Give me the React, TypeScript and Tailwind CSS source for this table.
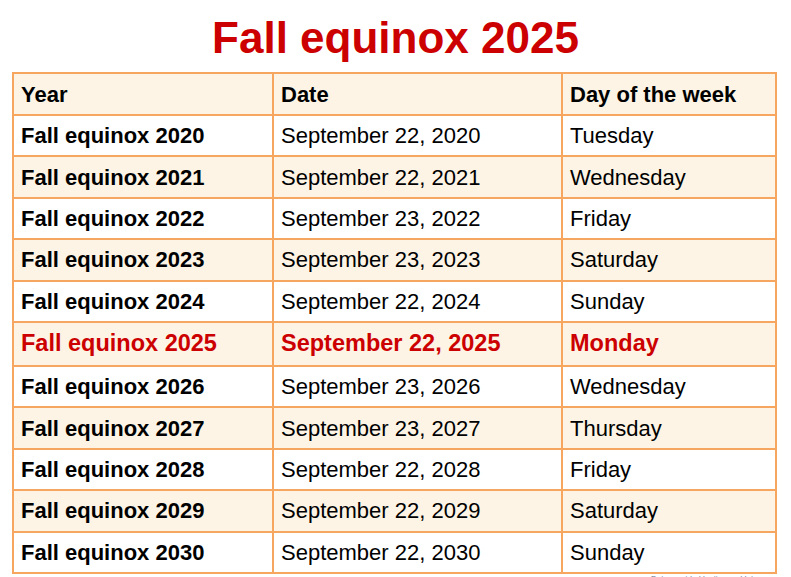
import React from 'react';

const rows = [
  { year: 'Fall equinox 2020', date: 'September 22, 2020', day: 'Tuesday' },
  { year: 'Fall equinox 2021', date: 'September 22, 2021', day: 'Wednesday' },
  { year: 'Fall equinox 2022', date: 'September 23, 2022', day: 'Friday' },
  { year: 'Fall equinox 2023', date: 'September 23, 2023', day: 'Saturday' },
  { year: 'Fall equinox 2024', date: 'September 22, 2024', day: 'Sunday' },
  { year: 'Fall equinox 2025', date: 'September 22, 2025', day: 'Monday', current: true },
  { year: 'Fall equinox 2026', date: 'September 23, 2026', day: 'Wednesday' },
  { year: 'Fall equinox 2027', date: 'September 23, 2027', day: 'Thursday' },
  { year: 'Fall equinox 2028', date: 'September 22, 2028', day: 'Friday' },
  { year: 'Fall equinox 2029', date: 'September 22, 2029', day: 'Saturday' },
  { year: 'Fall equinox 2030', date: 'September 22, 2030', day: 'Sunday' },
];

export default function App() {
  return (
    <div className="w-[791px] h-[577px] overflow-hidden bg-white text-black" style={{ fontFamily: '"Liberation Sans", Arial, sans-serif' }}>
      <h1 className="pt-4 text-center text-[44px] leading-none font-bold text-[#cc0000]">Fall equinox 2025</h1>

      <table className="ml-[12px] mt-[12px] w-[763px] border-collapse table-fixed">
        <colgroup>
          <col className="w-[260px]" />
          <col className="w-[289px]" />
          <col className="w-[214px]" />
        </colgroup>
        <thead>
          <tr className="bg-[#fdf4e5] h-[42px]">
            <th className="border-2 border-[#f7a660] pl-[7px] text-left text-[22px] font-bold">Year</th>
            <th className="border-2 border-[#f7a660] pl-[7px] text-left text-[22px] font-bold">Date</th>
            <th className="border-2 border-[#f7a660] pl-[7px] text-left text-[22px] font-bold">Day of the week</th>
          </tr>
        </thead>
        <tbody>
          {rows.map((r, i) => (
            <tr key={r.year} className={`${i % 2 === 1 ? 'bg-[#fdf4e5]' : 'bg-white'} ${r.current ? 'h-[44px]' : 'h-[41.4px]'}`}>
              {r.current ? (
                <>
                  <td className="border-2 border-[#f7a660] pl-[7px] text-[23.5px] font-bold text-[#cc0000]">{r.year}</td>
                  <td className="border-2 border-[#f7a660] pl-[7px] text-[23.5px] font-bold text-[#cc0000]">{r.date}</td>
                  <td className="border-2 border-[#f7a660] pl-[7px] text-[23.5px] font-bold text-[#cc0000]">{r.day}</td>
                </>
              ) : (
                <>
                  <td className="border-2 border-[#f7a660] pl-[7px] text-[22px] font-bold">{r.year}</td>
                  <td className="border-2 border-[#f7a660] pl-[7px] text-[22px]">{r.date}</td>
                  <td className="border-2 border-[#f7a660] pl-[7px] text-[22px]">{r.day}</td>
                </>
              )}
            </tr>
          ))}
        </tbody>
      </table>

      <p className="mr-[16px] mt-[1px] text-right text-[8px] leading-none text-gray-500">Data provided by timeanddate.com</p>
    </div>
  );
}
